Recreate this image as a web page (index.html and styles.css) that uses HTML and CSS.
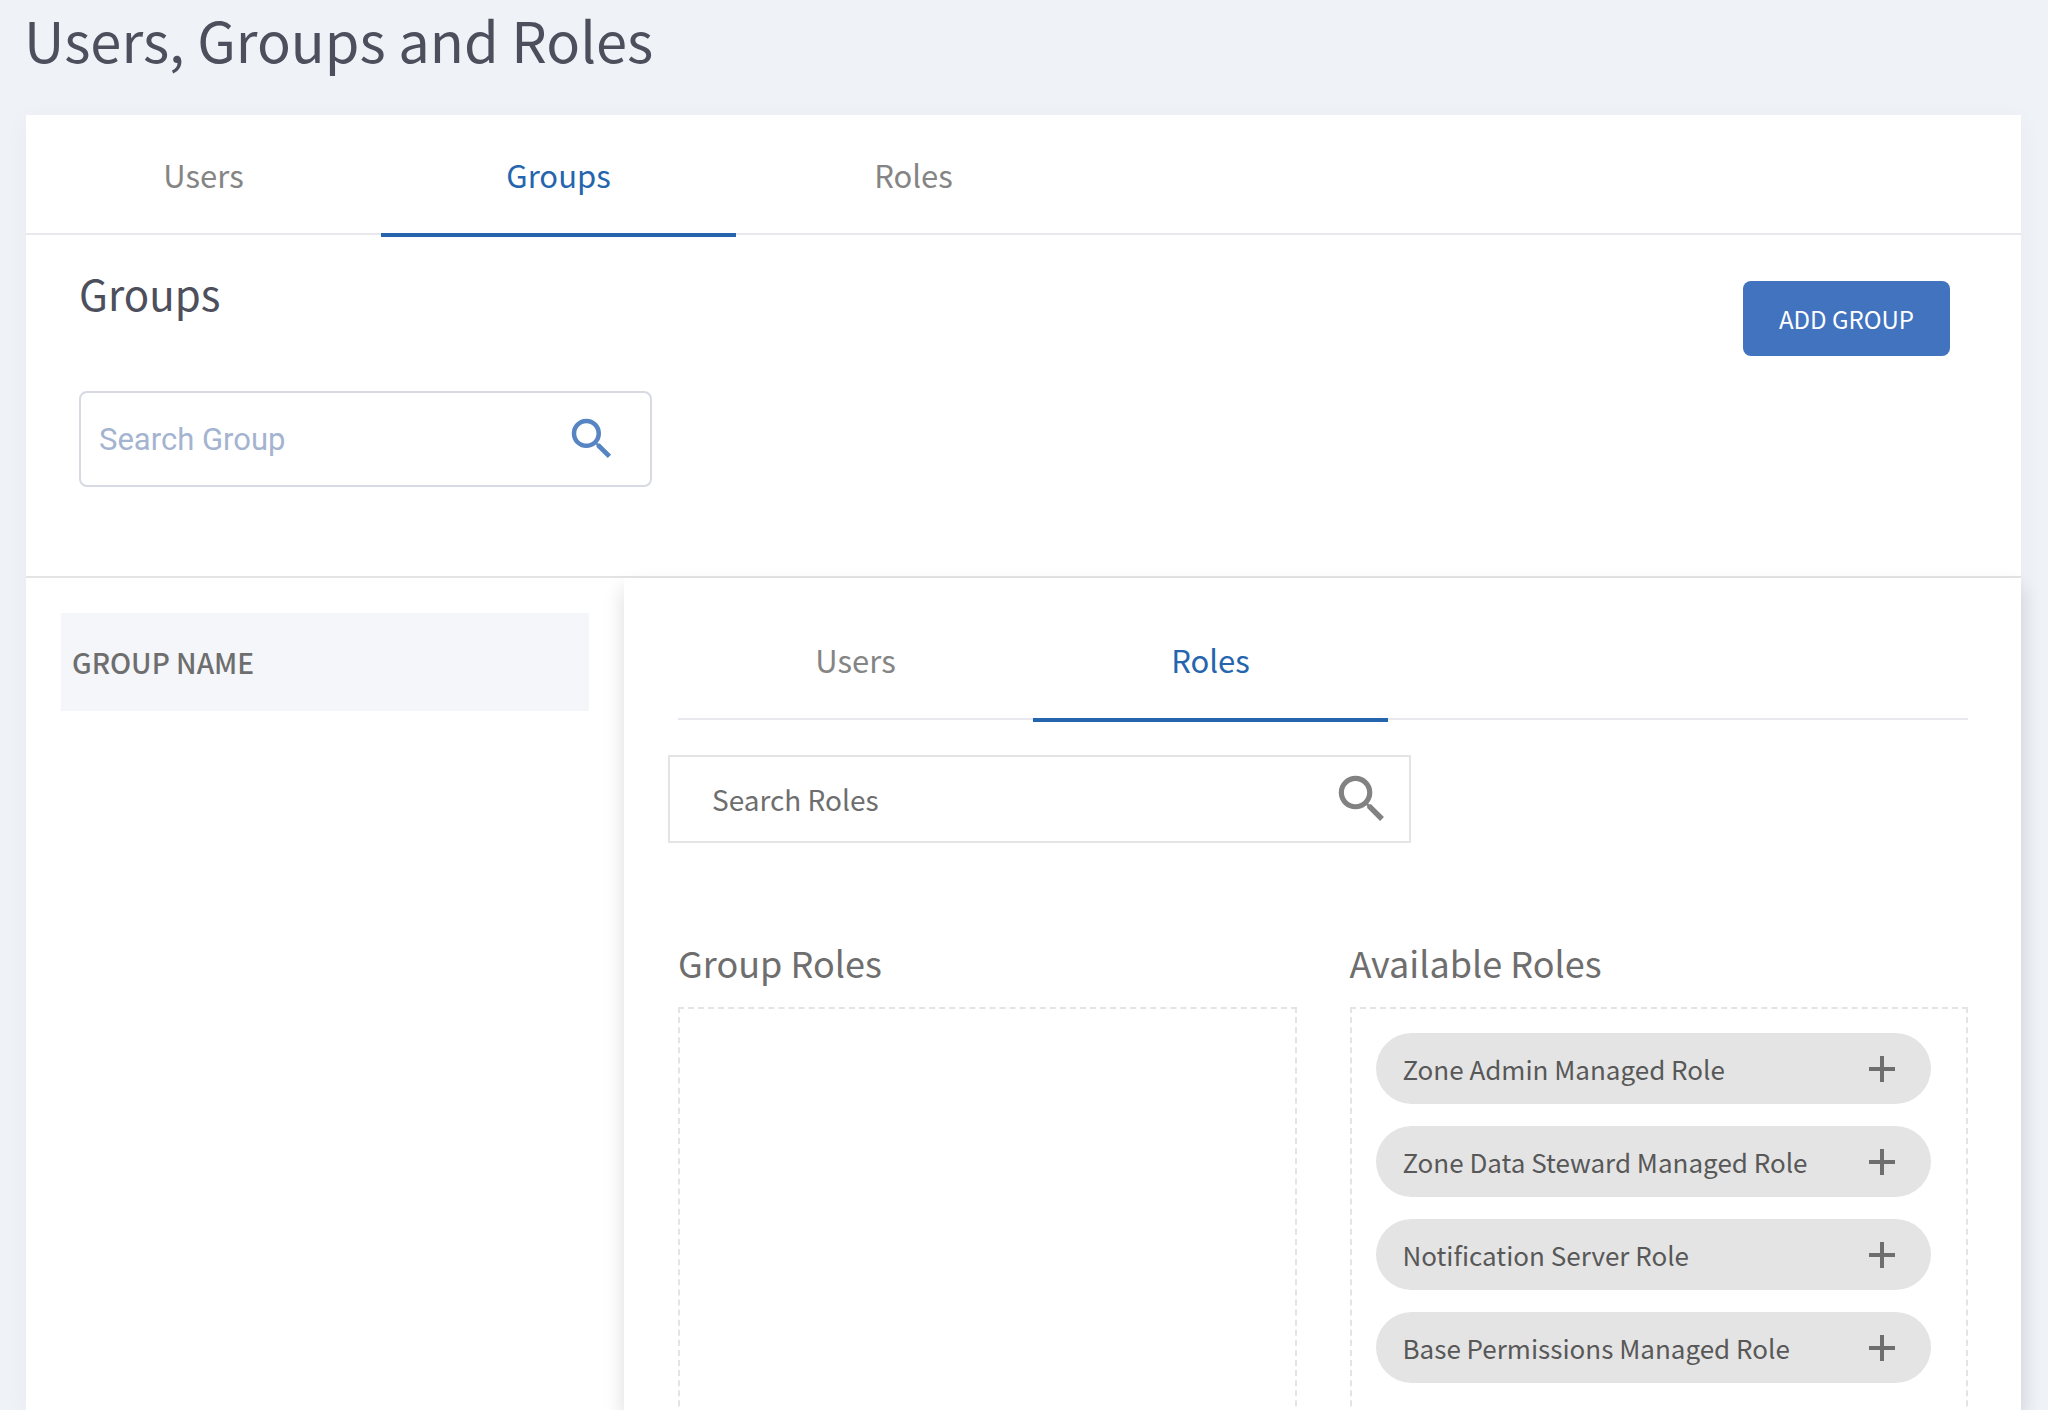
FILE: index.html
```html
<!DOCTYPE html>
<html lang="en">
<head>
<meta charset="utf-8">
<meta name="viewport" content="width=device-width, initial-scale=1">
<title>Users, Groups and Roles</title>
<link rel="stylesheet" href="styles.css">
</head>
<body>
<svg class="sprite" aria-hidden="true">
  <symbol id="icon-search" viewBox="0 0 24 24"><path d="M15.5 14h-.79l-.28-.27A6.47 6.47 0 0 0 16 9.5 6.5 6.5 0 1 0 9.5 16c1.61 0 3.09-.59 4.23-1.57l.27.28v.79l5 4.99L20.49 19l-4.99-5zm-6 0C7.01 14 5 11.99 5 9.5S7.01 5 9.5 5 14 7.01 14 9.5 11.99 14 9.5 14z"/></symbol>
  <symbol id="icon-plus" viewBox="0 0 28 28"><path d="M12 1h4v11h11v4H16v11h-4V16H1v-4h11z"/></symbol>
</svg>
<main class="page">
  <h1 class="page-title">Users, Groups and Roles</h1>
  <section class="card">
    <div class="tabs" role="tablist">
      <button class="tab" role="tab" type="button">Users</button>
      <button class="tab tab-active" role="tab" type="button" aria-selected="true">Groups</button>
      <button class="tab" role="tab" type="button">Roles</button>
    </div>
    <header class="toolbar">
      <div>
        <h2 class="section-title">Groups</h2>
        <label class="search search-group">
          <input class="search-input" type="text" placeholder="Search Group" aria-label="Search Group">
          <svg class="search-icon" aria-hidden="true"><use href="#icon-search"/></svg>
        </label>
      </div>
      <button class="add-button" type="button">ADD GROUP</button>
    </header>
    <div class="columns">
      <div class="group-list">
        <table class="group-table">
          <thead><tr><th scope="col">GROUP NAME</th></tr></thead>
        </table>
      </div>
      <div class="detail">
        <div class="tabs" role="tablist">
          <button class="tab" role="tab" type="button">Users</button>
          <button class="tab tab-active" role="tab" type="button" aria-selected="true">Roles</button>
        </div>
        <label class="search search-roles">
          <input class="search-input" type="text" placeholder="Search Roles" aria-label="Search Roles">
          <svg class="search-icon" aria-hidden="true"><use href="#icon-search"/></svg>
        </label>
        <div class="role-columns">
          <section class="role-column">
            <h3 class="role-title">Group Roles</h3>
            <ul class="role-box"></ul>
          </section>
          <section class="role-column">
            <h3 class="role-title">Available Roles</h3>
            <ul class="role-box">
              <li class="chip">Zone Admin Managed Role<button class="chip-add" type="button" aria-label="Add Zone Admin Managed Role"><svg><use href="#icon-plus"/></svg></button></li>
              <li class="chip">Zone Data Steward Managed Role<button class="chip-add" type="button" aria-label="Add Zone Data Steward Managed Role"><svg><use href="#icon-plus"/></svg></button></li>
              <li class="chip">Notification Server Role<button class="chip-add" type="button" aria-label="Add Notification Server Role"><svg><use href="#icon-plus"/></svg></button></li>
              <li class="chip">Base Permissions Managed Role<button class="chip-add" type="button" aria-label="Add Base Permissions Managed Role"><svg><use href="#icon-plus"/></svg></button></li>
            </ul>
          </section>
        </div>
      </div>
    </div>
  </section>
</main>
</body>
</html>
```
FILE: styles.css
```css
* {
  box-sizing: border-box;
}

body {
  margin: 0;
  height: 100vh;
  overflow: hidden;
  background: #eff3f8;
  color: #6e6e6e;
  font-family: "Noto Sans CJK SC", "Noto Sans", sans-serif;
}

h1, h2, h3, ul {
  margin: 0;
  padding: 0;
  font-weight: 400;
  list-style: none;
}

button {
  margin: 0;
  padding: 0;
  border: 0;
  background: none;
  font-family: inherit;
  cursor: pointer;
}

.sprite {
  display: none;
}

.page {
  display: flex;
  flex-direction: column;
  height: 100vh;
  padding: 3px 27px 0 24px;
}

.page-title {
  margin-bottom: 40px;
  color: #4d4f5c;
  font-size: 56px;
  line-height: 72px;
}

.card {
  display: flex;
  flex: 1;
  flex-direction: column;
  min-height: 0;
  margin-left: 2px;
  background: #fff;
  box-shadow: 0 4px 24px rgba(0, 0, 0, 0.04);
}

.tabs {
  display: flex;
  flex: none;
  height: 120px;
  border-bottom: 2px solid #e8e8ee;
}

.tab {
  flex: 0 1 355px;
  height: 122px;
  padding-top: 2px;
  border-bottom: 4px solid transparent;
  color: #858585;
  font-size: 31px;
  line-height: 40px;
}

.tab-active {
  border-bottom-color: #2565ae;
  color: #2565ae;
}

.toolbar {
  display: flex;
  flex: none;
  align-items: flex-start;
  justify-content: space-between;
  padding: 32px 71px 89px 53px;
  border-bottom: 2px solid #e4e4e4;
}

.section-title {
  margin-bottom: 72px;
  color: #4d4f5c;
  font-size: 42px;
  line-height: 52px;
}

.add-button {
  margin-top: 14px;
  padding: 0 36px;
  border-radius: 8px;
  background: #4173be;
  color: #fff;
  font-size: 24px;
  line-height: 75px;
}

.search {
  display: flex;
  align-items: center;
  background: #fff;
}

.search-input {
  flex: 1;
  min-width: 0;
  padding: 0;
  border: 0;
  outline: 0;
  background: none;
  font: inherit;
}

.search-icon {
  flex: none;
  fill: currentColor;
}

.search-group {
  width: 573px;
  max-width: 100%;
  height: 96px;
  padding: 0 31px 0 18px;
  border: 2px solid #d7dae2;
  border-radius: 8px;
  color: #5785c3;
  font-family: Roboto, sans-serif;
  font-size: 31px;
}

.search-group .search-input::placeholder {
  color: #a4b4d0;
  opacity: 1;
}

.search-group .search-icon {
  width: 54px;
  height: 54px;
}

.columns {
  display: grid;
  flex: 1;
  grid-template-columns: 598px 1fr;
  min-height: 0;
}

.group-list {
  padding: 35px;
}

.group-table {
  width: 100%;
  border-collapse: collapse;
}

.group-table th {
  height: 98px;
  padding: 0 11px;
  background: #f5f6fa;
  font-size: 28px;
  font-weight: 500;
  line-height: 40px;
  text-align: left;
}

.detail {
  min-height: 0;
  padding: 22px 53px 0 54px;
  background: #fff;
  box-shadow: 0 10px 20px rgba(0, 0, 0, 0.14);
}

.search-roles {
  width: 743px;
  height: 88px;
  margin: 35px 0 92px -10px;
  padding: 0 16px 0 42px;
  border: 2px solid #e4e4e4;
  color: #828282;
  font-size: 28px;
}

.search-roles .search-input::placeholder {
  color: #6e6e6e;
  opacity: 1;
}

.search-roles .search-icon {
  width: 62px;
  height: 62px;
}

.role-columns {
  display: grid;
  grid-template-columns: 1fr 1fr;
  gap: 53px;
}

.role-column {
  display: flex;
  flex-direction: column;
}

.role-title {
  margin-bottom: 18px;
  font-size: 36px;
  line-height: 54px;
}

.role-box {
  display: flex;
  flex: 1;
  flex-direction: column;
  gap: 22px;
  min-height: 480px;
  padding: 24px 35px 24px 24px;
  border: 2px dashed #e4e4e4;
}

.chip {
  display: flex;
  align-items: center;
  justify-content: space-between;
  height: 71px;
  padding: 0 35px 0 27px;
  border-radius: 36px;
  background: #e4e4e4;
  color: #585858;
  font-size: 26px;
  line-height: 40px;
}

.chip-add {
  flex: none;
  width: 28px;
  height: 28px;
  color: #6e6e6e;
}

.chip-add svg {
  display: block;
  width: 28px;
  height: 28px;
  fill: currentColor;
}
```
